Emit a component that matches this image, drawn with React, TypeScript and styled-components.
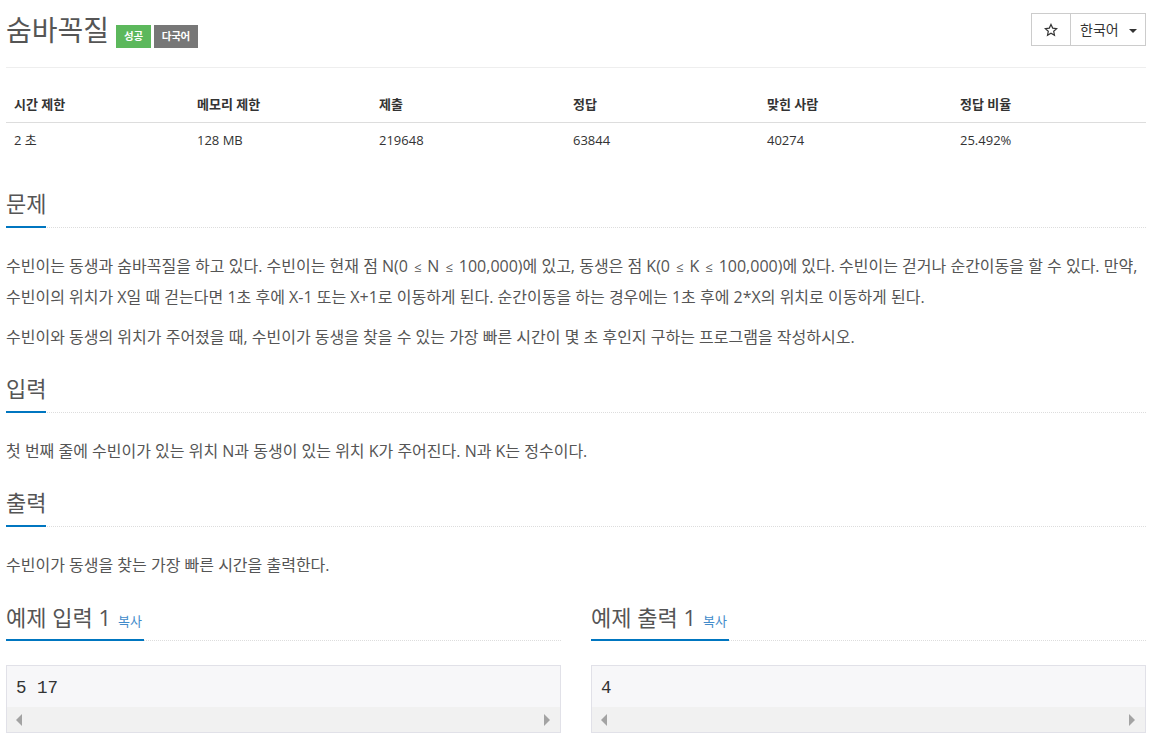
import React from "react";
import styled, { createGlobalStyle } from "styled-components";

const GlobalStyle = createGlobalStyle`
  html, body {
    margin: 0;
    padding: 0;
    background: #fff;
    overflow: hidden;
  }
  body {
    font-family: "Open Sans", "Noto Sans CJK KR", sans-serif;
    font-size: 14px;
    line-height: 20px;
    color: #333;
  }
`;

const Page = styled.div`
  width: 1140px;
  height: 751px;
  padding-left: 6px;
  overflow: hidden;
`;

const TitleBar = styled.header`
  display: flex;
  justify-content: space-between;
  align-items: flex-start;
  height: 67px;
  border-bottom: 1px solid #eee;
`;

const TitleGroup = styled.div`
  display: flex;
  align-items: flex-start;
`;

const Title = styled.h1`
  margin: 11px 0 0;
  font-size: 28px;
  line-height: 39px;
  font-weight: 400;
  color: #555;
`;

const Label = styled.span<{ $bg: string }>`
  display: block;
  margin: 25px 0 0 3px;
  padding: 0 8px;
  height: 23px;
  line-height: 23px;
  font-size: 10.5px;
  letter-spacing: -0.3px;
  font-weight: 700;
  color: #fff;
  background: ${({ $bg }) => $bg};
`;

const FirstLabel = styled(Label)`
  margin-left: 7px;
`;

const BtnGroup = styled.div`
  display: flex;
  margin-top: 13px;
  height: 33px;
  border: 1px solid #ccc;
  box-sizing: border-box;
`;

const StarBtn = styled.div`
  width: 38px;
  display: flex;
  align-items: center;
  justify-content: center;
  border-right: 1px solid #ccc;
`;

const LangBtn = styled.div`
  width: 74px;
  box-sizing: border-box;
  padding-left: 9px;
  display: flex;
  align-items: center;
  font-size: 14px;
  color: #333;
`;

const Caret = styled.span`
  margin-left: 10px;
  margin-top: 2px;
  border-top: 4px solid #333;
  border-left: 4px solid transparent;
  border-right: 4px solid transparent;
`;

const InfoTable = styled.div`
  margin-top: 20px;
  display: grid;
  grid-template-columns: 183px 182px 194px 194px 193px 194px;
`;

const HeadCell = styled.div`
  height: 35px;
  padding: 6px 8px 0;
  box-sizing: border-box;
  font-size: 13px;
  line-height: 20px;
  font-weight: 700;
  color: #333;
  border-bottom: 1px solid #ddd;
`;

const BodyCell = styled.div`
  height: 36px;
  padding: 7px 8px 0;
  box-sizing: border-box;
  font-size: 13px;
  line-height: 20px;
  color: #333;
`;

const Section = styled.section<{ $top: number }>`
  margin-top: ${({ $top }) => $top}px;
`;

const Headline = styled.div`
  display: flex;
  align-items: flex-end;
  border-bottom: 1px dotted #ddd;
`;

const HeadlineTitle = styled.h2`
  margin: 0 0 -1px;
  padding-bottom: 8px;
  font-size: 22px;
  line-height: 29px;
  font-weight: 400;
  color: #555;
  border-bottom: 2px solid #0076c0;
`;

const SampleTitle = styled(HeadlineTitle)`
  display: flex;
  align-items: baseline;
  padding-right: 2px;
  padding-bottom: 3px;
`;

const CopyLink = styled.a`
  margin-left: 7px;
  font-size: 13px;
  color: #428bca;
`;

const Paragraph = styled.p`
  margin: 0 0 10px;
  font-size: 16px;
  line-height: 30px;
  color: #555;
  white-space: nowrap;
`;

const ParagraphBlock = styled.div`
  margin-top: 23px;
`;

const LessEqual = styled.span`
  display: inline-block;
  width: 11.1px;
  text-align: center;
  font-size: 13px;
`;

const Samples = styled.div`
  margin-top: 23px;
  display: grid;
  grid-template-columns: 555px 555px;
  column-gap: 30px;
`;

const PreBox = styled.div`
  margin-top: 24px;
  height: 68px;
  box-sizing: border-box;
  border: 1px solid #e1e1e8;
  background: #f7f7f9;
  display: flex;
  flex-direction: column;
`;

const PreText = styled.pre`
  flex: 1;
  margin: 0;
  padding: 12px 9px 0;
  font-family: "Liberation Mono", monospace;
  font-size: 17.5px;
  line-height: 20px;
  color: #333;
`;

const ScrollTrack = styled.div`
  height: 25px;
  background: #f1f1f1;
  display: flex;
  align-items: center;
  justify-content: space-between;
  padding: 0 10px 0 9px;
`;

const Arrow = styled.span<{ $dir: "left" | "right" }>`
  border-top: 6px solid transparent;
  border-bottom: 6px solid transparent;
  ${({ $dir }) =>
    $dir === "left" ? "border-right: 6px solid #a3a3a3;" : "border-left: 6px solid #a3a3a3;"}
`;

const columns = [
  { head: "시간 제한", value: "2 초" },
  { head: "메모리 제한", value: "128 MB" },
  { head: "제출", value: "219648" },
  { head: "정답", value: "63844" },
  { head: "맞힌 사람", value: "40274" },
  { head: "정답 비율", value: "25.492%" },
];

const samples = [
  { title: "예제 입력 1", data: "5 17" },
  { title: "예제 출력 1", data: "4" },
];

const StarIcon = () => (
  <svg width="14" height="14" viewBox="0 0 14 14" fill="none" stroke="#333" strokeWidth="1.2">
    <path d="M7 1.4l1.7 3.7 4 .5-3 2.7.8 4L7 10.3l-3.5 2 .8-4-3-2.7 4-.5z" />
  </svg>
);

export default function App() {
  return (
    <Page>
      <GlobalStyle />
      <TitleBar>
        <TitleGroup>
          <Title>숨바꼭질</Title>
          <FirstLabel $bg="#5cb85c">성공</FirstLabel>
          <Label $bg="#777">다국어</Label>
        </TitleGroup>
        <BtnGroup>
          <StarBtn>
            <StarIcon />
          </StarBtn>
          <LangBtn>
            한국어
            <Caret />
          </LangBtn>
        </BtnGroup>
      </TitleBar>

      <InfoTable>
        {columns.map((c) => (
          <HeadCell key={c.head}>{c.head}</HeadCell>
        ))}
        {columns.map((c) => (
          <BodyCell key={c.head}>{c.value}</BodyCell>
        ))}
      </InfoTable>

      <Section $top={30}>
        <Headline>
          <HeadlineTitle>문제</HeadlineTitle>
        </Headline>
        <ParagraphBlock>
          <Paragraph>
            수빈이는 동생과 숨바꼭질을 하고 있다. 수빈이는 현재 점 N(0 <LessEqual>≤</LessEqual> N <LessEqual>≤</LessEqual> 100,000)에 있고, 동생은 점 K(0 <LessEqual>≤</LessEqual> K <LessEqual>≤</LessEqual> 100,000)에 있다. 수빈이는 걷거나 순간이동을 할 수 있다. 만약,
            <br />
            수빈이의 위치가 X일 때 걷는다면 1초 후에 X-1 또는 X+1로 이동하게 된다. 순간이동을 하는 경우에는 1초 후에 2*X의 위치로 이동하게 된다.
          </Paragraph>
          <Paragraph>
            수빈이와 동생의 위치가 주어졌을 때, 수빈이가 동생을 찾을 수 있는 가장 빠른 시간이 몇 초 후인지 구하는 프로그램을 작성하시오.
          </Paragraph>
        </ParagraphBlock>
      </Section>

      <Section $top={22}>
        <Headline>
          <HeadlineTitle>입력</HeadlineTitle>
        </Headline>
        <ParagraphBlock>
          <Paragraph>첫 번째 줄에 수빈이가 있는 위치 N과 동생이 있는 위치 K가 주어진다. N과 K는 정수이다.</Paragraph>
        </ParagraphBlock>
      </Section>

      <Section $top={22}>
        <Headline>
          <HeadlineTitle>출력</HeadlineTitle>
        </Headline>
        <ParagraphBlock>
          <Paragraph>수빈이가 동생을 찾는 가장 빠른 시간을 출력한다.</Paragraph>
        </ParagraphBlock>
      </Section>

      <Samples>
        {samples.map((s) => (
          <div key={s.title}>
            <Headline>
              <SampleTitle>
                {s.title}
                <CopyLink>복사</CopyLink>
              </SampleTitle>
            </Headline>
            <PreBox>
              <PreText>{s.data}</PreText>
              <ScrollTrack>
                <Arrow $dir="left" />
                <Arrow $dir="right" />
              </ScrollTrack>
            </PreBox>
          </div>
        ))}
      </Samples>
    </Page>
  );
}
